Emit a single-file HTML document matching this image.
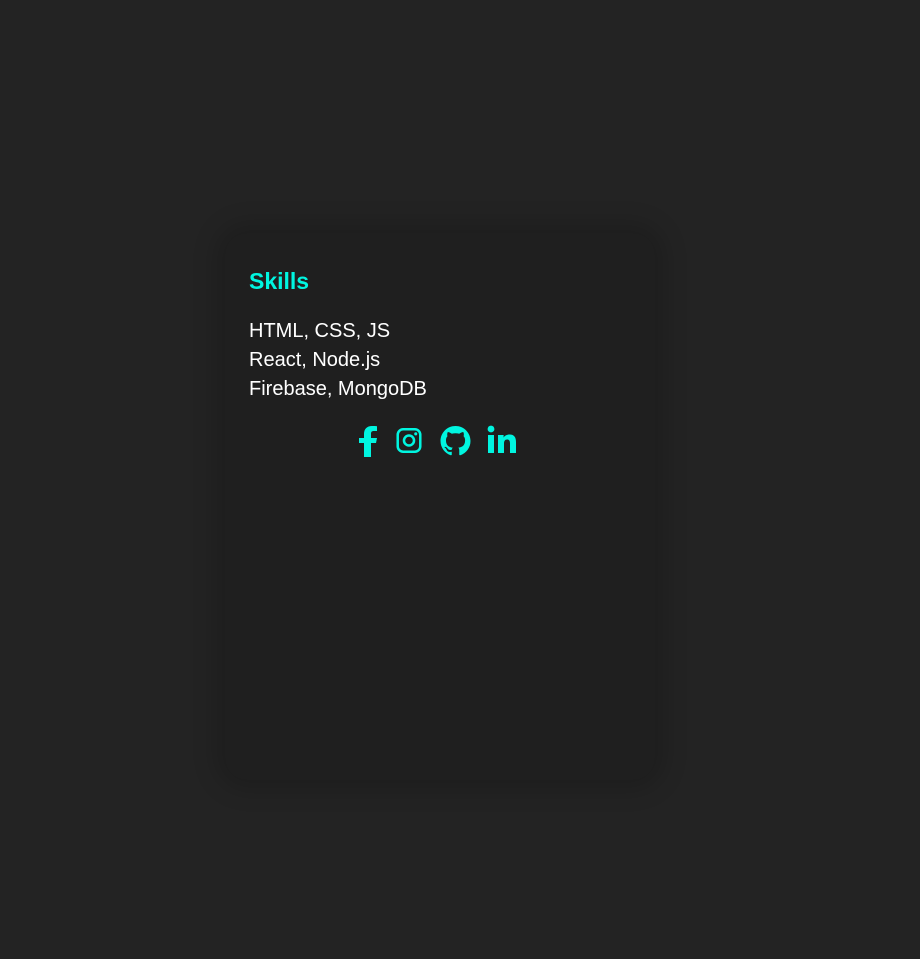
<!DOCTYPE html>
<html><head><style>
body{margin:0;background:#232323;width:920px;height:959px;overflow:hidden;font-family:"Liberation Sans",Arial,sans-serif}
.card{position:absolute;left:225px;top:233px;width:430px;height:547px;background:#1f1f1f;border-radius:22px;box-shadow:0 0 25px 8px rgba(0,0,0,0.18)}
h3{position:absolute;left:24px;top:35px;margin:0;color:#00f5e0;font-size:23px;font-weight:bold}
.t{position:absolute;left:24px;top:84px;color:#fff;font-size:20px;line-height:29px}
svg{position:absolute;fill:#00f5e0}
</style></head><body>
<div class="card">
<h3>Skills</h3>
<div class="t">HTML, CSS, JS<br>React, Node.js<br>Firebase, MongoDB</div>
</div>
<svg style="left:358px;top:425px" width="20" height="32" viewBox="0 0 20 32"><path d="M6 32V18H1v-5h5V9c0-5 3-8 8-8 2 0 4 0 5 .3V6h-3c-2.5 0-3 1-3 3v4h6l-1 5h-5v14z"/></svg>
<svg style="left:395px;top:427px" width="28" height="27" viewBox="0 0 28 28"><path fill-rule="evenodd" d="M8 1h12a7 7 0 0 1 7 7v12a7 7 0 0 1-7 7H8a7 7 0 0 1-7-7V8a7 7 0 0 1 7-7zm0 2.6A4.4 4.4 0 0 0 3.6 8v12A4.4 4.4 0 0 0 8 24.4h12a4.4 4.4 0 0 0 4.4-4.4V8A4.4 4.4 0 0 0 20 3.6zM14 7.5a6.5 6.5 0 1 1 0 13 6.5 6.5 0 0 1 0-13zm0 2.6a3.9 3.9 0 1 0 0 7.8 3.9 3.9 0 0 0 0-7.8zM21 5.5a1.6 1.6 0 1 1 0 3.2 1.6 1.6 0 0 1 0-3.2z"/></svg>
<svg style="left:440px;top:426px" width="31" height="30" viewBox="0 0 16 16"><path d="M8 0C3.580 0 0 3.58 0 8c0 3.54 2.29 6.53 5.47 7.590.4.07.55-.17.55-.38 0-.19-.01-.82-.01-1.49-2.01.37-2.530-.49-2.69-.94-.09-.23-.48-.94-.82-1.13-.28-.15-.68-.52-.01-.53.63-.01 1.080.58 1.230.82.72 1.21 1.870.87 2.330.66.07-.52.28-.87.51-1.07-1.78-.2-3.64-.89-3.64-3.950 0-.87.31-1.59.82-2.15-.08-.2-.36-1.02.08-2.12 0 0 .67-.21 2.2.82.64-.18 1.32-.27 2-.27.68 0 1.36.09 2 .27 1.53-1.04 2.2-.82 2.2-.82.44 1.1.16 1.92.08 2.12.51.56.82 1.27.82 2.15 0 3.07-1.87 3.75-3.65 3.95.29.25.54.73.54 1.48 0 1.07-.01 1.93-.01 2.2 0 .21.15.46.55.38A8.013 8.013 0 0 0 16 8c0-4.42-3.58-8-8-8z"/></svg>
<svg style="left:487px;top:425px" width="30" height="29" viewBox="0 0 30 29"><circle cx="4" cy="4" r="3.4"/><rect x="1" y="10" width="6" height="18"/><path d="M11 10h5.6v2.6c1-1.8 3.2-3.1 6-3.1 4.8 0 6.4 3 6.4 7.6V28h-6V18.5c0-2.3-.5-4-2.8-4-2.4 0-3.2 1.7-3.2 4V28h-6z"/></svg>
</body></html>
